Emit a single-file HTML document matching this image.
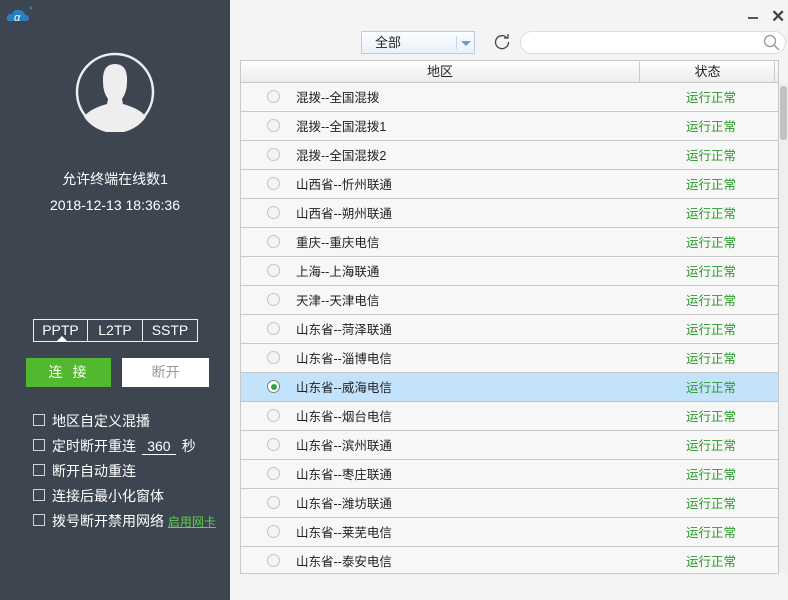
<!DOCTYPE html>
<html><head><meta charset="utf-8"><style>
*{margin:0;padding:0;box-sizing:border-box}
body{width:788px;height:600px;overflow:hidden;position:relative;background:#f4f4f4;font-family:"Liberation Sans","Noto Sans CJK SC",sans-serif;font-size:13px;color:#222}
#left{position:absolute;left:0;top:0;width:230px;height:600px;background:#3d4650;color:#fff}
.abs{position:absolute}
.cb{position:absolute;left:33px;width:12px;height:12px;border:1px solid #d0d4d8}
.cl{position:absolute;left:52px;font-size:14px;color:#fff}
.row{position:absolute;left:241px;width:537px;height:29px;border-bottom:1px solid #c8c8c8;background:#f7f7f7}
.row .r{position:absolute;left:26px;top:7px;width:13px;height:13px;border:1px solid #c4c4c4;border-radius:50%;background:#f4f4f4}
.row .t{position:absolute;left:55px;top:4px;font-size:12.5px;color:#222}
.row .s{position:absolute;left:445px;top:4px;font-size:12.5px;color:#2a9a2a}
</style></head><body>
<div id="left">
<svg class="abs" style="left:5px;top:5px" width="28" height="20" viewBox="0 0 28 20"><path d="M4 16 Q1 16 2 12 Q3 8 7 9 Q9 4 14 5 Q19 5 20 10 Q24 10 24 13 Q24 16 20 16 Z" fill="#2a7fc0"/><text x="9" y="16" font-size="11" fill="#fff" font-style="italic">α</text><circle cx="26" cy="3" r="1.5" fill="#2a7fc0"/></svg>
<svg class="abs" style="left:75px;top:52px" width="80" height="80" viewBox="0 0 80 80"><circle cx="40" cy="40" r="38" fill="none" stroke="#eee" stroke-width="2.5"/><path d="M28 30 Q27 12 40 12 Q53 12 52 30 Q52 40 47 47 L48 52 Q66 57 71 65 A38 38 0 0 1 9 65 Q14 57 32 52 L33 47 Q28 40 28 30Z" fill="#eee"/></svg>
<div class="abs" style="left:0;width:230px;top:169px;text-align:center;font-size:14px">允许终端在线数1</div>
<div class="abs" style="left:0;width:230px;top:197px;text-align:center;font-size:14px">2018-12-13 18:36:36</div>
<div class="abs" style="left:33px;top:319px;width:165px;height:23px;border:1px solid #eee;display:flex;font-size:14px">
<div style="width:54px;text-align:center;line-height:21px;border-right:1px solid #eee">PPTP</div>
<div style="width:55px;text-align:center;line-height:21px;border-right:1px solid #eee">L2TP</div>
<div style="flex:1;text-align:center;line-height:21px">SSTP</div></div>
<div class="abs" style="left:56px;top:336px;width:0;height:0;border-left:6px solid transparent;border-right:6px solid transparent;border-bottom:6px solid #fff"></div>
<div class="abs" style="left:26px;top:358px;width:85px;height:29px;background:#52b830;text-align:center;line-height:29px;font-size:14px;letter-spacing:10px;padding-left:8px">连接</div>
<div class="abs" style="left:122px;top:358px;width:87px;height:29px;background:#fff;text-align:center;line-height:29px;font-size:14px;color:#999">断开</div>
<div class="cb" style="top:414px"></div><div class="cl" style="top:411px">地区自定义混播</div>
<div class="cb" style="top:439px"></div><div class="cl" style="top:436px">定时断开重连 <span style="display:inline-block;width:34px;border-bottom:1px solid #fff;text-align:center;margin:0 2px">360</span> 秒</div>
<div class="cb" style="top:464px"></div><div class="cl" style="top:461px">断开自动重连</div>
<div class="cb" style="top:489px"></div><div class="cl" style="top:486px">连接后最小化窗体</div>
<div class="cb" style="top:514px"></div><div class="cl" style="top:511px">拨号断开禁用网络 <span style="color:#5fd04a;text-decoration:underline;font-size:12px">启用网卡</span></div>
</div>
<div class="abs" style="left:748px;top:17px;width:10px;height:2px;background:#555"></div>
<div class="abs" style="left:771px;top:7px;font-size:17px;color:#444;font-weight:bold">✕</div>
<div class="abs" style="left:361px;top:31px;width:114px;height:23px;border:1px solid #b8cde0;background:linear-gradient(#fbfdff,#e8f1fa);font-size:13px;line-height:21px;padding-left:13px">全部
<div class="abs" style="left:94px;top:4px;width:1px;height:13px;background:#c6d4e2"></div>
<div class="abs" style="left:99px;top:9px;border-left:5px solid transparent;border-right:5px solid transparent;border-top:5px solid #6a9cc8"></div></div>
<svg class="abs" style="left:493px;top:33px" width="18" height="18" viewBox="0 0 18 18"><path d="M14 5 A6.5 6.5 0 1 0 15.5 9" fill="none" stroke="#444" stroke-width="1.3"/><path d="M11 5 L15 5 L15 1" fill="none" stroke="#444" stroke-width="1.3"/></svg>
<div class="abs" style="left:520px;top:31px;width:266px;height:23px;border:1px solid #ddd;border-radius:12px;background:#fff"></div>
<svg class="abs" style="left:763px;top:34px" width="18" height="18" viewBox="0 0 18 18"><circle cx="7" cy="7" r="5.5" fill="none" stroke="#999" stroke-width="1.3"/><path d="M11 11 L16 16" stroke="#999" stroke-width="1.5"/></svg>
<div class="abs" style="left:240px;top:60px;width:539px;height:514px;border:1px solid #c8c8c8;background:#f7f7f7"></div>
<div class="abs" style="left:241px;top:61px;width:537px;height:22px;background:linear-gradient(#fff,#ececec);border-bottom:1px solid #c8c8c8;font-size:13px">
<div class="abs" style="left:0;width:399px;text-align:center;border-right:1px solid #ccc;height:21px;top:0;line-height:22px">地区</div>
<div class="abs" style="left:400px;width:134px;text-align:center;line-height:22px;border-right:1px solid #ccc;height:21px">状态</div></div>
<div class="row" style="top:83px"><div class="r"></div><div class="t">混拨--全国混拨</div><div class="s">运行正常</div></div>
<div class="row" style="top:112px"><div class="r"></div><div class="t">混拨--全国混拨1</div><div class="s">运行正常</div></div>
<div class="row" style="top:141px"><div class="r"></div><div class="t">混拨--全国混拨2</div><div class="s">运行正常</div></div>
<div class="row" style="top:170px"><div class="r"></div><div class="t">山西省--忻州联通</div><div class="s">运行正常</div></div>
<div class="row" style="top:199px"><div class="r"></div><div class="t">山西省--朔州联通</div><div class="s">运行正常</div></div>
<div class="row" style="top:228px"><div class="r"></div><div class="t">重庆--重庆电信</div><div class="s">运行正常</div></div>
<div class="row" style="top:257px"><div class="r"></div><div class="t">上海--上海联通</div><div class="s">运行正常</div></div>
<div class="row" style="top:286px"><div class="r"></div><div class="t">天津--天津电信</div><div class="s">运行正常</div></div>
<div class="row" style="top:315px"><div class="r"></div><div class="t">山东省--菏泽联通</div><div class="s">运行正常</div></div>
<div class="row" style="top:344px"><div class="r"></div><div class="t">山东省--淄博电信</div><div class="s">运行正常</div></div>
<div class="row" style="top:373px;background:#c3e2fb;border-bottom-color:#a9c7e0"><div class="r" style="background:#fff;border-color:#6a8a6a"><div style="position:absolute;left:2.5px;top:2.5px;width:6px;height:6px;border-radius:50%;background:#2aa84a"></div></div><div class="t">山东省--威海电信</div><div class="s">运行正常</div></div>
<div class="row" style="top:402px"><div class="r"></div><div class="t">山东省--烟台电信</div><div class="s">运行正常</div></div>
<div class="row" style="top:431px"><div class="r"></div><div class="t">山东省--滨州联通</div><div class="s">运行正常</div></div>
<div class="row" style="top:460px"><div class="r"></div><div class="t">山东省--枣庄联通</div><div class="s">运行正常</div></div>
<div class="row" style="top:489px"><div class="r"></div><div class="t">山东省--潍坊联通</div><div class="s">运行正常</div></div>
<div class="row" style="top:518px"><div class="r"></div><div class="t">山东省--莱芜电信</div><div class="s">运行正常</div></div>
<div class="row" style="top:547px;height:26px;border-bottom:none"><div class="r"></div><div class="t">山东省--泰安电信</div><div class="s">运行正常</div></div>
<div class="abs" style="left:779px;top:83px;width:9px;height:490px;background:#efefef"></div>
<div class="abs" style="left:780px;top:86px;width:7px;height:54px;background:#c2c2c2;border-radius:3px"></div>
</body></html>
